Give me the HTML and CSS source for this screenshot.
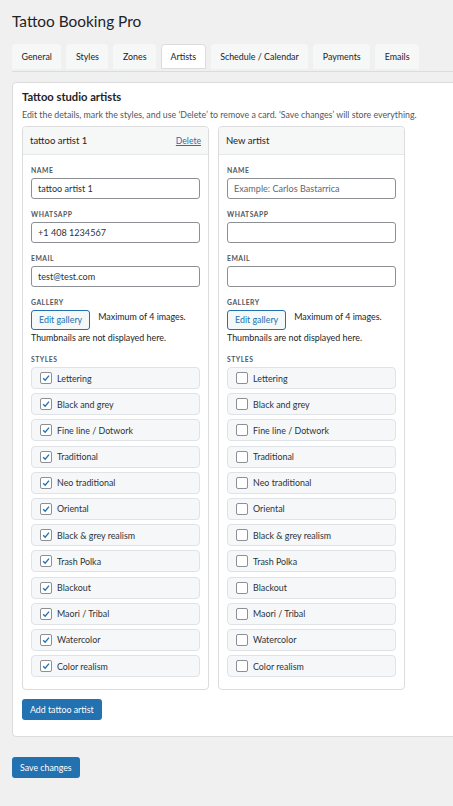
FILE: index.html
```html
<!DOCTYPE html>
<html>
<head>
<meta charset="utf-8">
<link rel="stylesheet" href="styles.css">
</head>
<body>
<div class="wrap">
  <h1 class="title">Tattoo Booking Pro</h1>
  <nav class="tabs">
    <span class="tab">General</span>
    <span class="tab">Styles</span>
    <span class="tab">Zones</span>
    <span class="tab active">Artists</span>
    <span class="tab">Schedule / Calendar</span>
    <span class="tab">Payments</span>
    <span class="tab">Emails</span>
  </nav>

  <section class="panel">
    <h2 class="panel-title">Tattoo studio artists</h2>
    <p class="panel-desc">Edit the details, mark the styles, and use ‘Delete’ to remove a card. ‘Save changes’ will store everything.</p>

    <div class="cards">
      <div class="card">
        <div class="card-head">
          <span class="card-name">tattoo artist 1</span>
          <a class="del">Delete</a>
        </div>
        <div class="card-body">
          <div class="field">
            <div class="lbl">Name</div>
            <input class="inp" type="text" value="tattoo artist 1">
          </div>
          <div class="field">
            <div class="lbl">WhatsApp</div>
            <input class="inp" type="text" value="+1 408 1234567">
          </div>
          <div class="field">
            <div class="lbl">Email</div>
            <input class="inp" type="text" value="test@test.com">
          </div>
          <div class="field">
            <div class="lbl">Gallery</div>
            <div class="gallery"><span class="gbtn">Edit gallery</span><span class="gnote">Maximum of 4 images.</span> Thumbnails are not displayed here.</div>
          </div>
          <div class="lbl">Styles</div>
          <div class="styles">
            <div class="srow"><span class="cb on"><svg viewBox="0 0 12 12"><path d="M2.6 6.2 L5 8.6 L9.6 3.2" /></svg></span>Lettering</div>
            <div class="srow"><span class="cb on"><svg viewBox="0 0 12 12"><path d="M2.6 6.2 L5 8.6 L9.6 3.2" /></svg></span>Black and grey</div>
            <div class="srow"><span class="cb on"><svg viewBox="0 0 12 12"><path d="M2.6 6.2 L5 8.6 L9.6 3.2" /></svg></span>Fine line / Dotwork</div>
            <div class="srow"><span class="cb on"><svg viewBox="0 0 12 12"><path d="M2.6 6.2 L5 8.6 L9.6 3.2" /></svg></span>Traditional</div>
            <div class="srow"><span class="cb on"><svg viewBox="0 0 12 12"><path d="M2.6 6.2 L5 8.6 L9.6 3.2" /></svg></span>Neo traditional</div>
            <div class="srow"><span class="cb on"><svg viewBox="0 0 12 12"><path d="M2.6 6.2 L5 8.6 L9.6 3.2" /></svg></span>Oriental</div>
            <div class="srow"><span class="cb on"><svg viewBox="0 0 12 12"><path d="M2.6 6.2 L5 8.6 L9.6 3.2" /></svg></span>Black &amp; grey realism</div>
            <div class="srow"><span class="cb on"><svg viewBox="0 0 12 12"><path d="M2.6 6.2 L5 8.6 L9.6 3.2" /></svg></span>Trash Polka</div>
            <div class="srow"><span class="cb on"><svg viewBox="0 0 12 12"><path d="M2.6 6.2 L5 8.6 L9.6 3.2" /></svg></span>Blackout</div>
            <div class="srow"><span class="cb on"><svg viewBox="0 0 12 12"><path d="M2.6 6.2 L5 8.6 L9.6 3.2" /></svg></span>Maori / Tribal</div>
            <div class="srow"><span class="cb on"><svg viewBox="0 0 12 12"><path d="M2.6 6.2 L5 8.6 L9.6 3.2" /></svg></span>Watercolor</div>
            <div class="srow"><span class="cb on"><svg viewBox="0 0 12 12"><path d="M2.6 6.2 L5 8.6 L9.6 3.2" /></svg></span>Color realism</div>
          </div>
        </div>
      </div>

      <div class="card">
        <div class="card-head">
          <span class="card-name">New artist</span>
        </div>
        <div class="card-body">
          <div class="field">
            <div class="lbl">Name</div>
            <input class="inp" type="text" placeholder="Example: Carlos Bastarrica">
          </div>
          <div class="field">
            <div class="lbl">WhatsApp</div>
            <input class="inp" type="text">
          </div>
          <div class="field">
            <div class="lbl">Email</div>
            <input class="inp" type="text">
          </div>
          <div class="field">
            <div class="lbl">Gallery</div>
            <div class="gallery"><span class="gbtn">Edit gallery</span><span class="gnote">Maximum of 4 images.</span> Thumbnails are not displayed here.</div>
          </div>
          <div class="lbl">Styles</div>
          <div class="styles">
            <div class="srow"><span class="cb"></span>Lettering</div>
            <div class="srow"><span class="cb"></span>Black and grey</div>
            <div class="srow"><span class="cb"></span>Fine line / Dotwork</div>
            <div class="srow"><span class="cb"></span>Traditional</div>
            <div class="srow"><span class="cb"></span>Neo traditional</div>
            <div class="srow"><span class="cb"></span>Oriental</div>
            <div class="srow"><span class="cb"></span>Black &amp; grey realism</div>
            <div class="srow"><span class="cb"></span>Trash Polka</div>
            <div class="srow"><span class="cb"></span>Blackout</div>
            <div class="srow"><span class="cb"></span>Maori / Tribal</div>
            <div class="srow"><span class="cb"></span>Watercolor</div>
            <div class="srow"><span class="cb"></span>Color realism</div>
          </div>
        </div>
      </div>
    </div>

    <span class="btn-primary add">Add tattoo artist</span>
  </section>

  <span class="btn-primary save">Save changes</span>
</div>
</body>
</html>
```
FILE: styles.css
```css
html, body {
  margin: 0;
  padding: 0;
  background: #f0f0f1;
  overflow-x: hidden;
}
body {
  font-family: Lato, "Noto Sans", sans-serif;
  font-size: 8.9px;
  color: #1d2327;
}
.wrap {
  padding: 0 0 20px 12px;
}
.title {
  margin: 0;
  padding-top: 9px;
  font-size: 15.4px;
  line-height: 24px;
  font-weight: 400;
  color: #1d2327;
}
.tabs {
  display: flex;
  gap: 5px;
  margin-top: 11px;
  padding-bottom: 2px;
  border-bottom: 1px solid #dcdcde;
  margin-right: -20px;
}
.tab {
  display: flex;
  align-items: center;
  height: 25px;
  padding: 0 9.5px;
  background: #f6f7f7;
  border-radius: 4px 4px 0 0;
  font-size: 8.9px;
  color: #1d2327;
}
.tab.active {
  background: #fff;
  box-shadow: inset 0 0 0 1px #dcdcde;
}
.panel {
  margin-top: 10px;
  margin-right: -20px;
  background: #fff;
  border: 1px solid #dcdcde;
  border-radius: 4px;
  padding: 5px 10px 16px 9px;
}
.panel-title {
  margin: 0;
  font-size: 11.2px;
  line-height: 18px;
  font-weight: 700;
}
.panel-desc {
  margin: 2px 0 4px;
  font-size: 8.8px;
  line-height: 14px;
  color: #50575e;
}
.cards {
  display: flex;
  gap: 9px;
  align-items: flex-start;
}
.card {
  width: 187px;
  box-sizing: border-box;
  border: 1px solid #dcdcde;
  border-radius: 4px;
  background: #fff;
}
.card-head {
  height: 27px;
  display: flex;
  align-items: center;
  justify-content: space-between;
  padding: 0 7px;
  background: #f6f7f7;
  border-bottom: 1px solid #e7e8ea;
  border-radius: 4px 4px 0 0;
}
.card-name {
  font-size: 9.5px;
  color: #1d2327;
}
.del {
  color: #2271b1;
  text-decoration: underline;
  font-size: 8.6px;
}
.card-body {
  padding: 10px 8px 12px;
}
.field {
  margin-bottom: 10px;
}
.lbl {
  font-size: 6.8px;
  line-height: 10px;
  font-weight: 700;
  letter-spacing: 0.5px;
  text-transform: uppercase;
  color: #50575e;
  margin-bottom: 3px;
}
.inp {
  display: block;
  box-sizing: border-box;
  width: 100%;
  height: 21px;
  margin: 0;
  padding: 0 6px;
  border: 1px solid #8c8f94;
  border-radius: 3px;
  font-family: inherit;
  font-size: 9.1px;
  color: #2c3338;
  background: #fff;
}
.inp::placeholder {
  color: #646970;
}
.gallery {
  font-size: 8.9px;
  line-height: 13px;
  color: #1d2327;
}
.gbtn {
  display: inline-block;
  vertical-align: top;
  box-sizing: border-box;
  height: 20px;
  line-height: 18px;
  padding: 0 7px;
  margin: 0 8px 1px 0;
  border: 1px solid #2271b1;
  border-radius: 3px;
  background: #f6f7f7;
  color: #2271b1;
}
.gnote {
  display: inline-block;
  vertical-align: top;
  line-height: 13px;
}
.styles {
  display: flex;
  flex-direction: column;
  gap: 4.2px;
}
.srow {
  display: flex;
  align-items: center;
  gap: 5px;
  height: 22px;
  box-sizing: border-box;
  padding: 0 8px;
  background: #f6f7f9;
  border: 1px solid #dfe3e8;
  border-radius: 4px;
  color: #2c3338;
}
.cb {
  width: 12px;
  height: 12px;
  box-sizing: border-box;
  border: 1px solid #8c8f94;
  border-radius: 2px;
  background: #fff;
  display: flex;
}
.cb svg {
  width: 10px;
  height: 10px;
  fill: none;
  stroke: #2271b1;
  stroke-width: 1.6;
}
.btn-primary {
  display: inline-block;
  height: 21px;
  line-height: 21px;
  padding: 0 8px;
  background: #2271b1;
  color: #fff;
  border-radius: 3px;
  font-size: 8.8px;
}
.add {
  margin-top: 9px;
}
.save {
  margin-top: 20px;
}
```
